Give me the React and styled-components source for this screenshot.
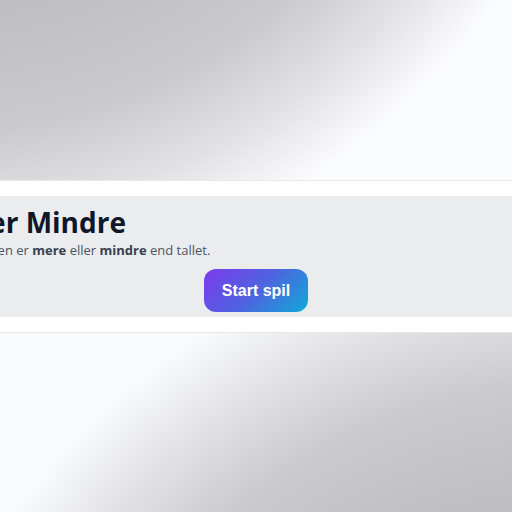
import React from "react"
import styled, { createGlobalStyle } from "styled-components"

const GlobalStyle = createGlobalStyle`
  html, body {
    margin: 0;
    padding: 0;
    background: #ffffff;
  }
  body {
    font-family: "Open Sans", "Noto Sans", Arial, sans-serif;
    overflow: hidden;
  }
`

const Page = styled.div`
  width: 512px;
  height: 512px;
  display: flex;
  flex-direction: column;
  overflow: hidden;
`

// soft grey blob fading to white, mirrored for top and bottom
const Backdrop = styled.div`
  height: ${(p) => p.$h}px;
  flex: none;
  background: ${(p) =>
    p.$flip
      ? `radial-gradient(circle at 582px ${p.$h + 408}px, #bcbbbf 0, #bebdc1 420px, #cbcbcd 540px, #e3e3e5 625px, #f8fafc 700px)`
      : `radial-gradient(circle at -70px -408px, #bcbbbf 0, #bfbec1 420px, #cacacc 540px, #e2e2e4 625px, #fbfcfe 700px)`};
  border-${(p) => (p.$flip ? "top" : "bottom")}: 1px solid #e5e7eb;
`

const Main = styled.main`
  flex: none;
  background: #ffffff;
  padding: 15px 0;
`

const Card = styled.section`
  background: #ebecee;
  height: 121px;
  box-sizing: border-box;
  display: flex;
  flex-direction: column;
  align-items: center;
  padding-top: 7px;
`

const Header = styled.div`
  width: 760px;
  flex: none;
  white-space: nowrap;
`

const Title = styled.h1`
  margin: 0;
  font-family: "Open Sans", "Noto Sans", sans-serif;
  font-weight: 700;
  font-size: 28px;
  line-height: 38px;
  color: #0f172a;
`

const Lead = styled.p`
  margin: 0;
  font-size: 13px;
  line-height: 18px;
  color: #4b5563;
  b {
    color: #374151;
    font-weight: 700;
  }
`

const StartButton = styled.button`
  margin-top: 10px;
  width: 104px;
  height: 43px;
  border: 0;
  border-radius: 12px;
  background: linear-gradient(135deg, #7c3aed 0%, #4f63e0 50%, #0fa9d8 100%);
  color: #ffffff;
  font-family: "Liberation Sans", Arial, sans-serif;
  font-weight: 700;
  font-size: 16px;
  cursor: pointer;
`

export default function App() {
  return (
    <Page>
      <GlobalStyle />
      <Backdrop $h={180} />
      <Main>
        <Card>
          <Header>
            <Title>Mere eller Mindre</Title>
            <Lead>
              Gæt om temperaturen er <b>mere</b> eller <b>mindre</b> end tallet.
            </Lead>
          </Header>
          <StartButton>Start spil</StartButton>
        </Card>
      </Main>
      <Backdrop $h={181} $flip />
    </Page>
  )
}
